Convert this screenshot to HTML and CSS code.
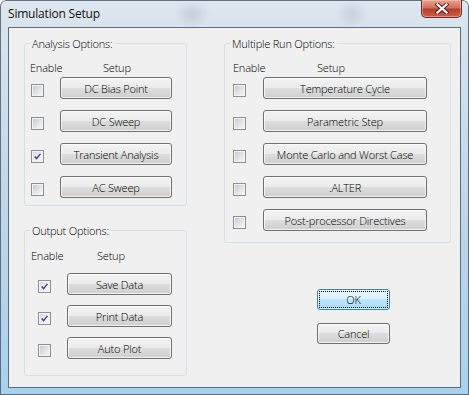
FILE: index.html
```html
<!DOCTYPE html>
<html>
<head>
<meta charset="utf-8">
<title>Simulation Setup</title>
<link rel="stylesheet" href="styles.css">
</head>
<body>
<div class="window">
  <div class="titlebar">
    <span class="title">Simulation Setup</span>
    <button class="close" aria-label="Close">
      <svg width="14" height="11" viewBox="0 0 14 11">
        <path d="M2.5 1.5 L11.5 9.5 M11.5 1.5 L2.5 9.5" stroke="#5a1c1c" stroke-width="4" stroke-linecap="square" fill="none"/>
        <path d="M2.5 1.5 L11.5 9.5 M11.5 1.5 L2.5 9.5" stroke="#ffffff" stroke-width="2.2" stroke-linecap="square" fill="none"/>
      </svg>
    </button>
  </div>
  <div class="client">
    <div class="col-left">
      <fieldset class="group analysis">
        <legend>Analysis Options:</legend>
        <div class="head"><span class="h-enable">Enable</span><span>Setup</span></div>
        <div class="rows">
          <div class="row"><span class="cb"></span><button class="btn">DC Bias Point</button></div>
          <div class="row"><span class="cb"></span><button class="btn">DC Sweep</button></div>
          <div class="row"><span class="cb checked"><svg viewBox="0 0 13 13"><path d="M3.2 6.4 L5.4 9 L10 3.4" stroke="#3b4a82" stroke-width="1.8" fill="none"/></svg></span><button class="btn">Transient Analysis</button></div>
          <div class="row"><span class="cb"></span><button class="btn">AC Sweep</button></div>
        </div>
      </fieldset>
      <fieldset class="group output">
        <legend>Output Options:</legend>
        <div class="head"><span class="h-enable">Enable</span><span>Setup</span></div>
        <div class="rows">
          <div class="row"><span class="cb checked"><svg viewBox="0 0 13 13"><path d="M3.2 6.4 L5.4 9 L10 3.4" stroke="#3b4a82" stroke-width="1.8" fill="none"/></svg></span><button class="btn">Save Data</button></div>
          <div class="row"><span class="cb checked"><svg viewBox="0 0 13 13"><path d="M3.2 6.4 L5.4 9 L10 3.4" stroke="#3b4a82" stroke-width="1.8" fill="none"/></svg></span><button class="btn">Print Data</button></div>
          <div class="row"><span class="cb"></span><button class="btn">Auto Plot</button></div>
        </div>
      </fieldset>
    </div>
    <div class="col-right">
      <fieldset class="group multi">
        <legend>Multiple Run Options:</legend>
        <div class="head"><span class="h-enable">Enable</span><span>Setup</span></div>
        <div class="rows">
          <div class="row"><span class="cb"></span><button class="btn">Temperature Cycle</button></div>
          <div class="row"><span class="cb"></span><button class="btn">Parametric Step</button></div>
          <div class="row"><span class="cb"></span><button class="btn">Monte Carlo and Worst Case</button></div>
          <div class="row"><span class="cb"></span><button class="btn">.ALTER</button></div>
          <div class="row"><span class="cb"></span><button class="btn">Post-processor Directives</button></div>
        </div>
      </fieldset>
      <div class="dlg-buttons">
        <button class="btn dlg default">OK</button>
        <button class="btn dlg">Cancel</button>
      </div>
    </div>
  </div>
</div>
</body>
</html>
```

FILE: styles.css
```css
html, body {
  margin: 0;
  padding: 0;
  background: #ffffff;
}

body {
  font-family: "Open Sans", "Noto Sans", sans-serif;
  font-size: 11px;
  font-weight: 350;
  letter-spacing: -0.2px;
  color: #000;
}

.window {
  width: 469px;
  height: 395px;
  box-sizing: border-box;
  padding: 0 8px 7px 8px;
  display: flex;
  flex-direction: column;
  border-radius: 6px 6px 0 0;
  background:
    radial-gradient(ellipse 18px 14px at 192px 14px, rgba(150,165,180,0.35), rgba(150,165,180,0) 100%),
    radial-gradient(ellipse 16px 14px at 352px 14px, rgba(150,165,180,0.3), rgba(150,165,180,0) 100%),
    linear-gradient(to bottom, #dfe7ef 0, #d8e3ec 27px, #bcd5e8 60%, #a9d1ee 100%);
  box-shadow: inset 0 0 0 1px rgba(60, 75, 95, 0.75);
}

.titlebar {
  height: 27px;
  flex: none;
  display: flex;
  align-items: center;
  justify-content: space-between;
}

.title {
  font-size: 12px;
  font-weight: 400;
  letter-spacing: -0.2px;
  color: #111;
}

.close {
  align-self: flex-start;
  width: 41px;
  height: 18px;
  padding: 0;
  margin: 0 -1px 0 0;
  border: 1px solid #6b2a2a;
  border-top: none;
  border-radius: 0 0 5px 5px;
  background: linear-gradient(to bottom, #e8a493 0, #d0705c 45%, #b73e2b 55%, #c9604c 100%);
  box-shadow: inset 0 0 0 1px rgba(255, 210, 200, 0.45);
  display: flex;
  align-items: center;
  justify-content: center;
}

.client {
  flex: 1;
  box-sizing: border-box;
  background: #f0f0f0;
  border: 1px solid #5b6e80;
  display: flex;
  padding: 8px 9px 0 15px;
  gap: 37px;
}

.col-left {
  width: 163px;
  display: flex;
  flex-direction: column;
  gap: 17px;
}

.col-right {
  width: 227px;
  display: flex;
  flex-direction: column;
}

.group {
  margin: 0;
  padding: 0;
  min-width: 0;
  border: 1px solid #d5dfe5;
  border-radius: 3px;
}

.group legend {
  margin-left: 5px;
  padding: 0 2px;
  line-height: 15px;
}

.head {
  display: flex;
  line-height: 18px;
  margin-top: 8px;
}

.rows {
  display: flex;
  flex-direction: column;
  gap: 11px;
}

.row {
  display: flex;
  align-items: center;
  height: 22px;
}

.btn {
  font: inherit;
  letter-spacing: inherit;
  color: #000;
  height: 22px;
  padding: 0;
  border: 1px solid #707070;
  border-radius: 3px;
  background: linear-gradient(to bottom, #f3f3f3 0, #ebebeb 50%, #dddddd 50%, #cfcfcf 100%);
  box-shadow: inset 0 0 0 1px rgba(255, 255, 255, 0.7);
  text-align: center;
}

.cb {
  width: 13px;
  height: 13px;
  box-sizing: border-box;
  border: 1px solid #8f8f8f;
  background: #f4f4f4;
  padding: 1px;
  margin-top: 4px;
  flex: none;
  display: flex;
}

.cb::before {
  content: "";
  flex: 1;
  background: linear-gradient(135deg, #c7cbd1 0, #e2e4e7 55%, #f6f6f6 100%);
}

.cb.checked::before {
  display: none;
}

.cb.checked {
  padding: 0;
  background: linear-gradient(135deg, #d3d6db 0, #eceef0 55%, #f8f8f8 100%);
  box-shadow: inset 0 0 0 1px #f4f4f4;
}

.cb svg {
  width: 11px;
  height: 11px;
}

/* Analysis group */
.analysis {
  padding-bottom: 7px;
}
.analysis .head { padding-left: 5px; }
.analysis .h-enable { width: 73px; }
.analysis .cb { margin-left: 6px; }
.analysis .btn { width: 112px; margin-left: 16px; }

/* Output group */
.output {
  padding-bottom: 16px;
}
.output .head { padding-left: 6px; margin-top: 9px; margin-bottom: 8px; }
.output .h-enable { width: 66px; }
.output .rows { gap: 10px; }
.output .cb { margin-left: 13px; }
.output .btn { width: 105px; margin-left: 16px; }

/* Multiple Run group */
.multi {
  padding-bottom: 11px;
}
.multi .head { padding-left: 8px; }
.multi .h-enable { width: 84px; }
.multi .cb { margin-left: 8px; }
.multi .btn { width: 164px; margin-left: 17px; }

.dlg-buttons {
  display: flex;
  flex-direction: column;
  gap: 13px;
  margin-top: 46px;
  padding-left: 93px;
}

.btn.dlg {
  width: 73px;
  height: 21px;
}

.btn.default {
  border-color: #3c7fb1;
  background: linear-gradient(to bottom, #eaf6fd 0, #d9f0fc 50%, #bee6fd 50%, #a7d9f5 100%);
  box-shadow: inset 0 0 0 1px rgba(255, 255, 255, 0.6);
  outline: 1px dotted #000;
  outline-offset: -3px;
}
```
